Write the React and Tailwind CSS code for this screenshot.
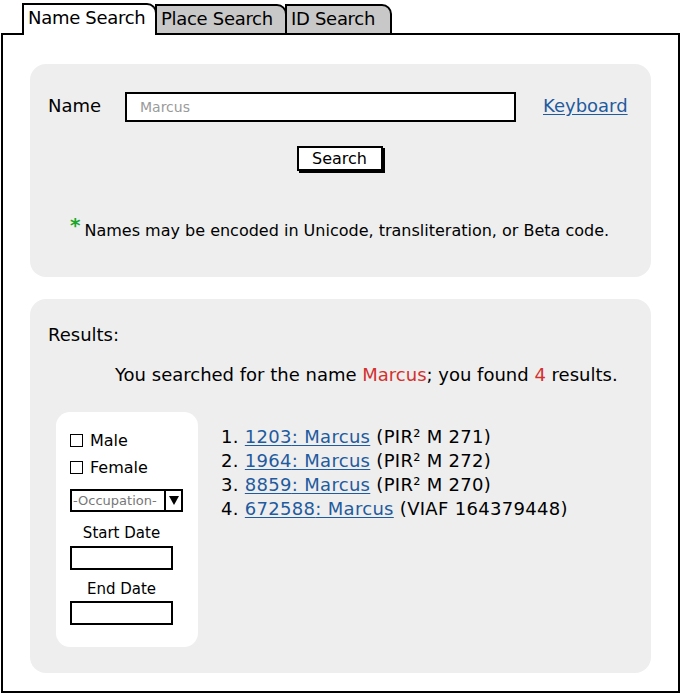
import React from "react";

const font = { fontFamily: "'DejaVu Sans', 'Open Sans', sans-serif" };

const Tab = ({ label, active, w }) => (
  <div
    className={`relative h-[31px] pl-[4px] pt-[2px] border-2 border-black rounded-tr-[10px] text-[18px] leading-[22px] tracking-[-0.3px] text-black whitespace-nowrap ${w} ${
      active ? "bg-white z-10 border-b-0 h-[32px]" : "bg-[#c8c8c8] -ml-[2px]"
    }`}
  >
    {label}
  </div>
);

const Result = ({ n, id, src }) => (
  <li className="leading-[24px]">
    {n}.{" "}
    <a href="#" className="text-[#1f5b9e] underline underline-offset-2">
      {id}: Marcus
    </a>{" "}
    ({src})
  </li>
);

const Check = ({ label }) => (
  <label className="flex items-center gap-[7px] text-[16px] leading-[27px]">
    <span className="w-[13px] h-[13px] border border-black bg-white" />
    {label}
  </label>
);

const App = () => {
  return (
    <div className="w-[681px] h-[694px] bg-white text-black" style={font}>
      <div className="flex items-end pl-[22px] pt-[3px]">
        <Tab label="Name Search" active w="w-[135px]" />
        <Tab label="Place Search" w="w-[132px]" />
        <Tab label="ID Search" w="w-[107px]" />
      </div>
      <div className="mx-[1px] -mt-[2px] h-[660px] border-2 border-black px-[27px] pt-[29px]">
        {/* search panel */}
        <div className="h-[213px] bg-[#eeeeee] rounded-[16px] px-[18px] pt-[28px]">
          <div className="flex items-center">
            <span className="w-[77px] text-[18px] -mt-[3px]">Name</span>
            <div className="w-[391px] h-[30px] border-2 border-black bg-white px-[13px] flex items-center text-[14px] text-[#9a9a9a]">
              Marcus
            </div>
            <a href="#" className="ml-[27px] -mt-[3px] text-[18px] text-[#1f5b9e] underline underline-offset-2">
              Keyboard
            </a>
          </div>
          <div className="flex justify-center mt-[24px] pr-[2px]">
            <button className="w-[86px] h-[25px] border-2 border-black bg-white text-[16px] leading-none shadow-[2px_2px_0_#000]">
              Search
            </button>
          </div>
          <p className="mt-[48px] pl-[22px] text-[16px] flex items-start">
            <span className="text-[#1aa62a] text-[20px] font-bold leading-[12px] mr-[4px]">*</span>
            Names may be encoded in Unicode, transliteration, or Beta code.
          </p>
        </div>

        {/* results panel */}
        <div className="mt-[22px] h-[374px] bg-[#eeeeee] rounded-[16px] px-[18px] pt-[24px]">
          <div className="text-[18px] leading-[24px]">Results:</div>
          <p className="mt-[16px] pl-[67px] text-[18px] leading-[24px]">
            You searched for the name <span className="text-[#d3312d]">Marcus</span>; you
            found <span className="text-[#d3312d]">4</span> results.
          </p>
          <div className="flex mt-[25px] pl-[8px]">
            <div className="w-[142px] h-[235px] bg-white rounded-[14px] px-[14px] pt-[15px]">
              <Check label="Male" />
              <Check label="Female" />
              <div className="mt-[8px] w-[113px] h-[23px] flex border-2 border-black bg-white">
                <span className="flex-1 text-[13px] text-[#777] leading-[19px] pl-[1px] whitespace-nowrap overflow-hidden">-Occupation-</span>
                <span className="w-[17px] border-l-2 border-black flex items-center justify-center">
                  <svg width="10" height="9" viewBox="0 0 10 9">
                    <path d="M0 0 H10 L5 9 Z" fill="#000" />
                  </svg>
                </span>
              </div>
              <div className="mt-[11px] w-[103px] text-center text-[15px] leading-[20px]">Start Date</div>
              <div className="mt-[3px] w-[103px] h-[24px] border-2 border-black bg-white" />
              <div className="mt-[9px] w-[103px] text-center text-[15px] leading-[20px]">End Date</div>
              <div className="mt-[2px] w-[103px] h-[24px] border-2 border-black bg-white" />
            </div>
            <ol className="ml-[23px] mt-[13px] text-[18px] tracking-[0.3px]">
              <Result n={1} id="1203" src="PIR² M 271" />
              <Result n={2} id="1964" src="PIR² M 272" />
              <Result n={3} id="8859" src="PIR² M 270" />
              <Result n={4} id="672588" src="VIAF 164379448" />
            </ol>
          </div>
        </div>
      </div>
    </div>
  );
};

export default App;
